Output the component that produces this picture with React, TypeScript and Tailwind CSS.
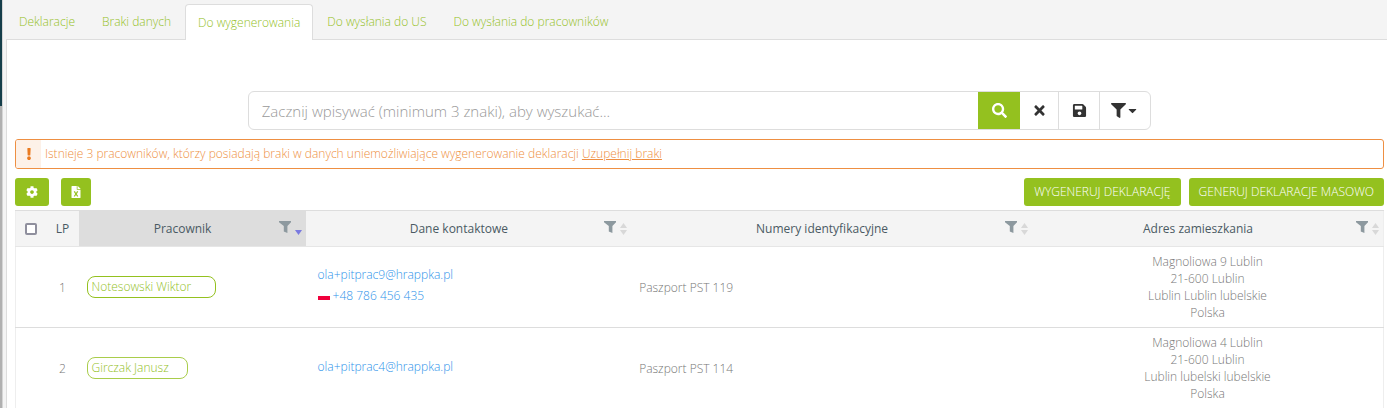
import React, { useState } from 'react';
import { FaCaretDown, FaCog, FaExclamation, FaFileExcel, FaFilter, FaSave, FaSearch, FaTimes } from 'react-icons/fa';

interface Employee {
  id: number;
  name: string;
  badgeClass: string;
  email: string;
  phone?: string;
  identity: string;
  address: string[];
}

const TABS = ['Deklaracje', 'Braki danych', 'Do wygenerowania', 'Do wysłania do US', 'Do wysłania do pracowników'];

const COLUMNS = ['Pracownik', 'Dane kontaktowe', 'Numery identyfikacyjne', 'Adres zamieszkania'];

const EMPLOYEES: Employee[] = [
  {
    id: 1,
    name: 'Notesowski Wiktor',
    badgeClass: 'border-[#94c11f] pr-6',
    email: 'ola+pitprac9@hrappka.pl',
    phone: '+48 786 456 435',
    identity: 'Paszport PST 119',
    address: ['Magnoliowa 9 Lublin', '21-600 Lublin', 'Lublin Lublin lubelskie', 'Polska'],
  },
  {
    id: 2,
    name: 'Girczak Janusz',
    badgeClass: 'border-[#a9cd4b] pr-[18px]',
    email: 'ola+pitprac4@hrappka.pl',
    identity: 'Paszport PST 114',
    address: ['Magnoliowa 4 Lublin', '21-600 Lublin', 'Lublin lubelski lubelskie', 'Polska'],
  },
];

const Funnel = () => (
  <svg className="size-3" viewBox="0 0 12 12" fill="currentColor">
    <path d="M0 0h12v1.2L8.4 5v7L4.8 10.4V5L0 1.2z" />
  </svg>
);

const SortArrows = ({ active }: { active: boolean }) => (
  <svg className="h-3 w-[7px]" viewBox="0 0 7 12">
    {!active && <path d="M3.5 0L7 5H0z" fill="#d8d8d8" />}
    <path d="M0 7h7L3.5 12z" fill={active ? '#7a7ae0' : '#d8d8d8'} />
  </svg>
);

const App: React.FC = () => {
  const [activeTab, setActiveTab] = useState(2);
  const [query, setQuery] = useState('');
  const [sorted, setSorted] = useState(0);

  return (
    <div className="flex min-h-screen overflow-hidden bg-[#f4f4f4] font-['Open_Sans',sans-serif] text-xs font-light text-[#777]">
      {/* edge of the side menu */}
      <div className="flex w-[3px] shrink-0 flex-col border-r border-[#d5d5d5] bg-[#b0b0b0]">
        <div className="h-[106px] bg-[#153e4a]" />
      </div>

      <div className="ml-[3px] flex min-w-0 flex-1 flex-col pt-1">
        <nav className="flex gap-px">
          {TABS.map((tab, idx) => (
            <button
              key={tab}
              onClick={() => setActiveTab(idx)}
              className={
                idx === activeTab
                  ? 'relative z-10 -mb-px h-9 rounded-t border border-b-0 border-[#ddd] bg-white px-3 text-[#94c11f]'
                  : '-mb-px h-9 border border-transparent px-3 text-[#94c11f]'
              }
            >
              {tab}
            </button>
          ))}
        </nav>

        <main className="flex-1 border-l border-t border-[#ddd] bg-white pl-2 pr-[3px] pt-[51px]">
          <form className="mx-auto flex h-[39px] w-[66%] overflow-hidden rounded-md border border-[#ddd]" onSubmit={(e) => e.preventDefault()}>
            <input
              type="text"
              aria-label="Szukaj"
              value={query}
              onChange={(e) => setQuery(e.target.value)}
              placeholder="Zacznij wpisywać (minimum 3 znaki), aby wyszukać..."
              className="min-w-0 flex-1 px-[13px] text-[15px] font-light text-[#555] outline-none placeholder:text-[#999]"
            />
            <button type="submit" aria-label="Szukaj" className="flex w-[42px] items-center justify-center bg-[#94c11f] text-white">
              <FaSearch size={15} />
            </button>
            <button type="button" aria-label="Wyczyść" onClick={() => setQuery('')} className="flex w-[39px] items-center justify-center border-r border-[#ddd] text-[#333]">
              <FaTimes size={15} />
            </button>
            <button type="button" aria-label="Zapisz" className="flex w-[41px] items-center justify-center border-r border-[#ddd] text-[#333]">
              <FaSave size={15} />
            </button>
            <button type="button" aria-label="Filtry" className="flex w-[50px] items-center justify-center text-[#333]">
              <FaFilter size={15} />
              <FaCaretDown size={13} />
            </button>
          </form>

          <div className="mt-[9px] flex h-[30px] items-center overflow-hidden rounded-[3px] border border-[#ee8f42] text-[#ee8f42]">
            <div className="flex w-[25px] items-center justify-center self-stretch bg-[#fdf1e8] text-[#ea7a20]">
              <FaExclamation size={12} />
            </div>
            <p className="pl-1">
              Istnieje 3 pracowników, którzy posiadają braki w danych uniemożliwiające wygenerowanie deklaracji{' '}
              <a href="#" className="underline">Uzupełnij braki</a>
            </p>
          </div>

          <div className="mt-[9px] flex h-7 text-white">
            <button aria-label="Ustawienia" className="mr-3 flex w-[34px] items-center justify-center rounded-[3px] bg-[#94c11f]">
              <FaCog size={12} />
            </button>
            <button aria-label="Eksport do Excela" className="flex w-[30px] items-center justify-center rounded-[3px] bg-[#94c11f]">
              <FaFileExcel size={12} />
            </button>
            <button className="ml-auto mr-2 rounded-[3px] bg-[#94c11f] px-[10px] uppercase">Wygeneruj deklarację</button>
            <button className="rounded-[3px] bg-[#94c11f] px-[10px] uppercase">Generuj deklaracje masowo</button>
          </div>

          <table className="mt-1 w-full table-fixed border-x border-[#eee]">
            <colgroup>
              <col className="w-[31px]" />
              <col className="w-8" />
              <col className="w-[16.6%]" />
              <col className="w-[23.8%]" />
              <col className="w-[29.3%]" />
              <col />
            </colgroup>
            <thead>
              <tr className="h-9 border-b border-t border-b-[#e6e6e6] border-t-[#ddd] bg-[#f4f4f4] text-[#4a5a63]">
                <th>
                  <input type="checkbox" aria-label="Zaznacz wszystkie" className="mx-auto block size-3 appearance-none rounded-[2px] border-2 border-[#8f8f9d] bg-white checked:bg-[#94c11f]" />
                </th>
                <th className="font-normal">LP</th>
                {COLUMNS.map((column, idx) => (
                  <th key={column} className={idx === sorted ? 'bg-[#ddd] px-1 font-normal' : 'px-1 font-normal'}>
                    <div className="flex items-center">
                      <span className="flex-1 pl-1">{column}</span>
                      <button aria-label={`Filtruj: ${column}`} className="mb-1 mr-1 text-[#8d999f]">
                        <Funnel />
                      </button>
                      <button aria-label={`Sortuj: ${column}`} onClick={() => setSorted(idx)}>
                        <SortArrows active={idx === sorted} />
                      </button>
                    </div>
                  </th>
                ))}
              </tr>
            </thead>
            <tbody>
              {EMPLOYEES.map((employee) => (
                <tr key={employee.id} className="border-b border-[#ddd] leading-[17px]">
                  <td />
                  <td className="text-center">{employee.id}</td>
                  <td className="px-2">
                    <a href="#" className={`inline-block rounded-lg border pl-1 leading-5 text-[#94c11f] ${employee.badgeClass}`}>
                      {employee.name}
                    </a>
                  </td>
                  <td className="px-3 pb-1 text-[#2e93ea]">
                    <a href="#" className="block leading-[21px]">{employee.email}</a>
                    {employee.phone && (
                      <a href="#" className="flex items-center gap-[3px] leading-[21px]">
                        {/* lower half of the Polish flag */}
                        <svg className="h-2 w-3" viewBox="0 0 12 8"><path d="M0 4h12v4H0z" fill="#f0003c" /></svg>
                        {employee.phone}
                      </a>
                    )}
                  </td>
                  <td className="px-2">{employee.identity}</td>
                  <td className="py-[6px] text-center">
                    {employee.address.map((line) => (
                      <div key={line}>{line}</div>
                    ))}
                  </td>
                </tr>
              ))}
            </tbody>
          </table>
        </main>
      </div>
    </div>
  );
};

export default App;
